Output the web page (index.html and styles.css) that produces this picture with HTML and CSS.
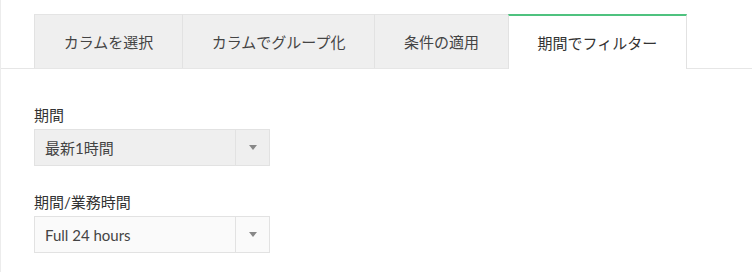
FILE: index.html
```html
<!DOCTYPE html>
<html lang="ja">
<head>
<meta charset="utf-8">
<link rel="stylesheet" href="styles.css">
</head>
<body>
<div class="page">
  <div class="tabs">
    <div class="tab">カラムを選択</div>
    <div class="tab">カラムでグループ化</div>
    <div class="tab">条件の適用</div>
    <div class="tab active">期間でフィルター</div>
  </div>
  <div class="form">
    <div class="field">
      <div class="label">期間</div>
      <div class="select disabled">
        <span class="value">最新1時間</span>
        <span class="arrow"></span>
      </div>
    </div>
    <div class="field">
      <div class="label">期間/業務時間</div>
      <div class="select">
        <span class="value">Full 24 hours</span>
        <span class="arrow"></span>
      </div>
    </div>
  </div>
</div>
</body>
</html>
```

FILE: styles.css
```css
* { box-sizing: border-box; }
html, body { margin: 0; padding: 0; background: #fff; }
body {
  font-family: Lato, "Noto Sans CJK JP", sans-serif;
  color: #333;
}
.page {
  width: 752px;
  height: 272px;
  border-left: 1px solid #ececec;
}
.tabs {
  display: flex;
  padding: 14px 0 0 33px;
  border-bottom: 1px solid #e6e6e6;
}
.tab {
  height: 54px;
  padding: 0 28.75px;
  display: flex;
  align-items: center;
  font-size: 15px;
  color: #444;
  background: #efefef;
  border-top: 1px solid #e4e4e4;
  border-left: 1px solid #e2e2e2;
}
.tab.active {
  background: #fff;
  border-top: 2px solid #4fc27f;
  border-right: 1px solid #e2e2e2;
  height: 55px;
  margin-bottom: -1px;
  padding-bottom: 1px;
  color: #333;
}
.form {
  padding: 36px 0 0 33px;
  display: flex;
  flex-direction: column;
  gap: 26px;
}
.label {
  font-size: 15px;
  line-height: 20px;
  color: #333;
  margin-bottom: 4px;
}
.select {
  width: 236px;
  height: 37px;
  border: 1px solid #e2e2e2;
  background: #fafafa;
  display: flex;
  align-items: center;
}
.select.disabled { background: #efefef; }
.value {
  flex: 1;
  padding-left: 10px;
  font-size: 15px;
  color: #444;
}
.arrow {
  width: 34px;
  height: 100%;
  border-left: 1px solid #e2e2e2;
  display: flex;
  align-items: center;
  justify-content: center;
}
.arrow::after {
  content: "";
  width: 0;
  height: 0;
  border-left: 4px solid transparent;
  border-right: 4px solid transparent;
  border-top: 5px solid #888;
}
```
